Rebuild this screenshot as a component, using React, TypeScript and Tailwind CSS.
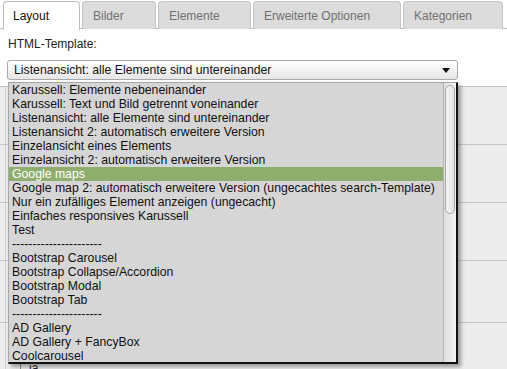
import React from "react";

const tabs = [
  { label: "Layout", w: "w-[77px]", active: true },
  { label: "Bilder", w: "w-[74px]", active: false },
  { label: "Elemente", w: "w-[93px]", active: false },
  { label: "Erweiterte Optionen", w: "w-[148px]", active: false },
  { label: "Kategorien", w: "w-[100px]", active: false },
];

const dash = "----------------------";

const items = [
  "Karussell: Elemente nebeneinander",
  "Karussell: Text und Bild getrennt voneinander",
  "Listenansicht: alle Elemente sind untereinander",
  "Listenansicht 2: automatisch erweitere Version",
  "Einzelansicht eines Elements",
  "Einzelansicht 2: automatisch erweitere Version",
  "Google maps",
  "Google map 2: automatisch erweitere Version (ungecachtes search-Template)",
  "Nur ein zufälliges Element anzeigen (ungecacht)",
  "Einfaches responsives Karussell",
  "Test",
  dash,
  "Bootstrap Carousel",
  "Bootstrap Collapse/Accordion",
  "Bootstrap Modal",
  "Bootstrap Tab",
  dash,
  "AD Gallery",
  "AD Gallery + FancyBox",
  "Coolcarousel",
];

export default function App() {
  return (
    <div className="relative w-[507px] h-[369px] overflow-hidden bg-white font-['Liberation_Sans',Arial,sans-serif] text-[12px] text-[#222]">
      {/* Tabs */}
      <div className="flex gap-[2px] pl-[3px] pt-[1px] h-[29px] border-b border-[#bdbdbd]">
        {tabs.map((t) => (
          <div
            key={t.label}
            className={
              t.active
                ? `${t.w} h-[29px] flex items-center pb-[1px] pl-[9px] rounded-t-[4px] border border-b-0 border-[#bdbdbd] bg-white text-[#111] relative z-10`
                : `${t.w} h-[28px] flex items-center pl-[10px] rounded-t-[4px] border border-b-0 border-[#c4c4c4] bg-[#dcdcdc] text-[#707070]`
            }
          >
            {t.label}
          </div>
        ))}
      </div>

      {/* Label */}
      <div className="pl-[8px] pt-[7px] leading-[16px] text-[#222]">HTML-Template:</div>

      {/* Select */}
      <div className="ml-[7px] mt-[8px] w-[451px] h-[20px] flex items-center justify-between border border-[#a9a9a9] rounded-[3px] bg-gradient-to-b from-white to-[#e6e6e6] pl-[6px] pr-[7px] text-[12.25px] text-[#111]">
        <span>Listenansicht: alle Elemente sind untereinander</span>
        <svg width="8" height="5" viewBox="0 0 8 5">
          <path d="M0 0 L8 0 L4 5 Z" fill="#111" />
        </svg>
      </div>

      {/* Background rows behind dropdown */}
      <div className="mt-[6px] bg-[#ececec]">
        {[58, 58, 58, 62].map((h, i) => (
          <div
            key={i}
            className={`border-t border-[#c4c4c4] flex ${h === 58 ? "h-[58px]" : "h-[62px]"}`}
          >
            <div className="w-[5px]" />
            <div className="flex-1 border-l border-[#cfcfcf]" />
          </div>
        ))}
        <div className="border-t border-[#c4c4c4] flex h-[60px]">
          <div className="w-[5px]" />
          <div className="flex-1 border-l border-[#cfcfcf] pl-[14px] pt-[38px] flex items-start gap-[4px]">
            <span className="mt-[2px] w-[5px] h-[10px] border-l border-[#888]" />
            <span className="text-[#222] leading-[14px]">ja</span>
          </div>
        </div>
      </div>

      {/* Dropdown list overlay */}
      <div className="absolute left-[8px] top-[82px] w-[450px] h-[282px] flex bg-[#d6d6d6] border-l border-t border-[#a6a6a6] border-r-2 border-b-2 border-r-[#111] border-b-[#111] shadow-[3px_3px_4px_rgba(0,0,0,0.35)]">
        <div className="flex-1 flex flex-col text-[12.25px] text-[#111]">
          {items.map((it, i) => (
            <div
              key={i}
              className={
                it === "Google maps"
                  ? "h-[14px] leading-[14px] pl-[3px] whitespace-nowrap bg-[#8fae6d] text-white"
                  : "h-[14px] leading-[14px] pl-[3px] whitespace-nowrap"
              }
            >
              {it}
            </div>
          ))}
        </div>
        <div className="w-[13px] border-l border-[#b3b3b3] bg-gradient-to-r from-[#e0e0e0] to-[#f2f2f2] flex justify-center">
          <div className="mt-[2px] w-[10px] h-[129px] rounded-full border border-[#a6a6a6] bg-gradient-to-r from-[#f4f4f4] to-[#e4e4e4]" />
        </div>
      </div>
    </div>
  );
}
